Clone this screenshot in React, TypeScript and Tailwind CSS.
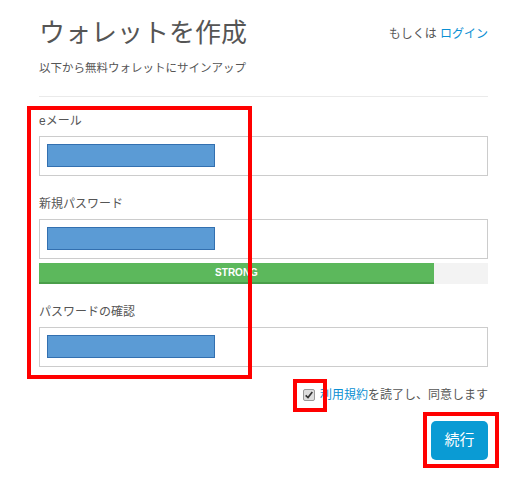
import React from "react";

const font = { fontFamily: '"Liberation Sans", "Noto Sans CJK JP", sans-serif' };

function Field({ label, top }: { label: string; top: string }) {
  return (
    <div className={top}>
      <div className="h-[18px] text-[12px] leading-[18px] text-[#555]">{label}</div>
      <div className="mt-[6px] h-[40px] border border-[#ccc] bg-white pl-[7px] pt-[7px]">
        <div className="h-[23px] w-[168px] border border-[#3370b0] bg-[#5b9bd5]" />
      </div>
    </div>
  );
}

export default function App() {
  return (
    <div className="relative h-[489px] w-[526px] bg-white" style={font}>
      <div className="w-[488px] pl-[39px]">
        <div className="flex items-start justify-between pt-[14px]">
          <h1 className="text-[26px] leading-[38px] text-[#555]">ウォレットを作成</h1>
          <div className="pt-[11px] text-[12px] leading-[18px] text-[#555]">
            もしくは <a className="text-[#0b8fd3]">ログイン</a>
          </div>
        </div>
        <p className="mt-[7px] text-[11.5px] leading-[18px] text-[#555]">以下から無料ウォレットにサインアップ</p>
        <div className="mt-[19px] h-px bg-[#eaeaea]" />

        <Field label="eメール" top="mt-[15px]" />
        <Field label="新規パスワード" top="mt-[19px]" />
        <div className="mt-[4px] flex h-[21px] bg-[#f3f3f3]">
          <div className="flex h-full w-[395px] items-center justify-center border-b-2 border-[#4a9e4a] bg-[#5cb85c] text-[10px] font-bold text-white">
            STRONG
          </div>
        </div>
        <Field label="パスワードの確認" top="mt-[19px]" />

        <div className="mt-[19px] flex items-center justify-end text-[12px] leading-[18px] text-[#555]">
          <span className="mr-[5px] flex h-[12px] w-[12px] shrink-0 items-center justify-center rounded-[2px] border border-[#999] bg-[#ddd]">
            <svg viewBox="0 0 12 12" className="h-[10px] w-[10px]">
              <path d="M2 6.5 L4.8 9 L10 2.5" fill="none" stroke="#333" strokeWidth="2" />
            </svg>
          </span>
          <a className="text-[#0b8fd3]">利用規約</a>を読了し、同意します
        </div>

        <div className="mt-[17px] flex justify-end">
          <button className="h-[39px] w-[57px] rounded-[5px] bg-[#0a9bd4] text-[15px] text-white">続行</button>
        </div>
      </div>

      {/* annotation boxes */}
      <div className="absolute left-[27px] top-[106px] h-[273px] w-[225px] border-4 border-[#ff0000]" />
      <div className="absolute left-[293px] top-[379px] h-[33px] w-[34px] border-4 border-[#ff0000]" />
      <div className="absolute left-[423px] top-[412px] h-[56px] w-[76px] border-4 border-[#ff0000]" />
    </div>
  );
}
